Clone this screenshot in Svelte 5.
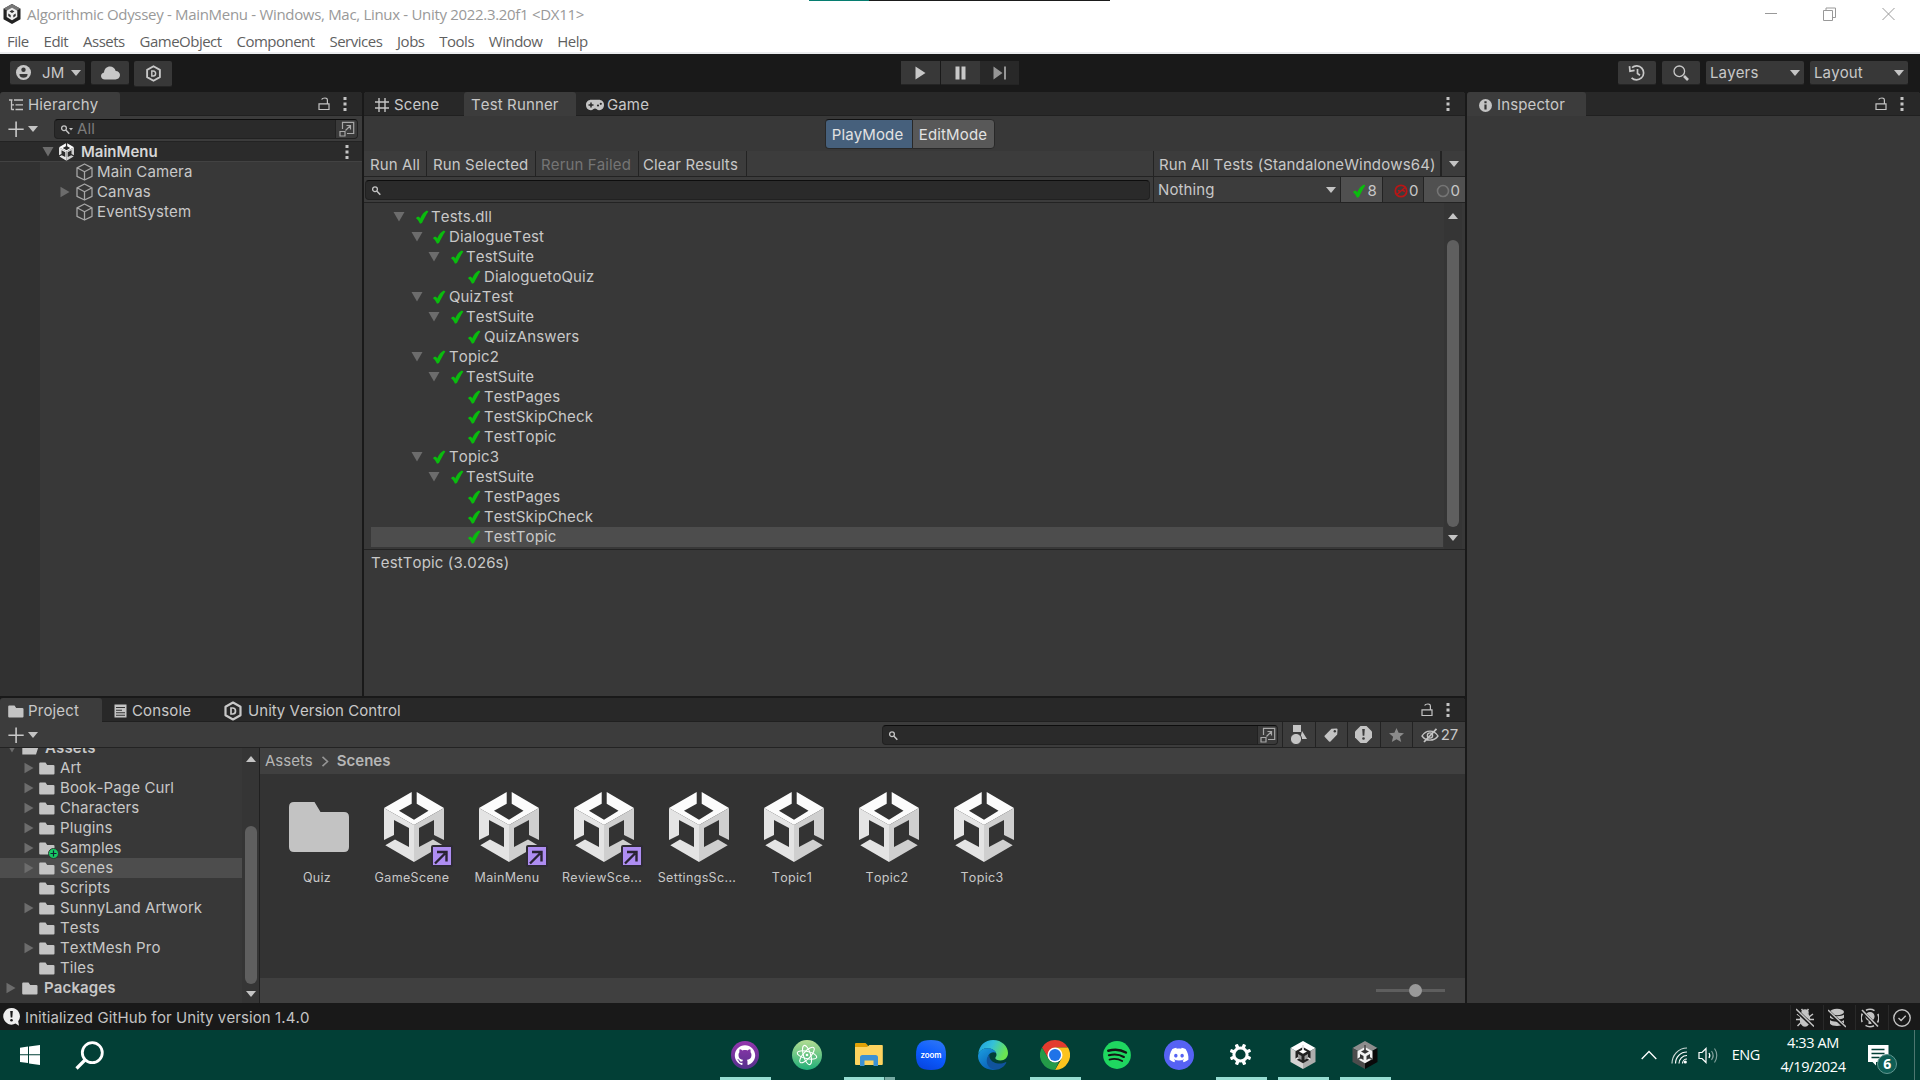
<script>
  const menus = ['File', 'Edit', 'Assets', 'GameObject', 'Component', 'Services', 'Jobs', 'Tools', 'Window', 'Help'];

  const tests = [
    { d: 0, n: 'Tests.dll', open: true },
    { d: 1, n: 'DialogueTest', open: true },
    { d: 2, n: 'TestSuite', open: true },
    { d: 3, n: 'DialoguetoQuiz' },
    { d: 1, n: 'QuizTest', open: true },
    { d: 2, n: 'TestSuite', open: true },
    { d: 3, n: 'QuizAnswers' },
    { d: 1, n: 'Topic2', open: true },
    { d: 2, n: 'TestSuite', open: true },
    { d: 3, n: 'TestPages' },
    { d: 3, n: 'TestSkipCheck' },
    { d: 3, n: 'TestTopic' },
    { d: 1, n: 'Topic3', open: true },
    { d: 2, n: 'TestSuite', open: true },
    { d: 3, n: 'TestPages' },
    { d: 3, n: 'TestSkipCheck' },
    { d: 3, n: 'TestTopic', selected: true }
  ];

  const folders = [
    { n: 'Art', arrow: true },
    { n: 'Book-Page Curl', arrow: true },
    { n: 'Characters', arrow: true },
    { n: 'Plugins', arrow: true },
    { n: 'Samples', arrow: true, added: true },
    { n: 'Scenes', arrow: true, selected: true },
    { n: 'Scripts' },
    { n: 'SunnyLand Artwork', arrow: true },
    { n: 'Tests' },
    { n: 'TextMesh Pro', arrow: true },
    { n: 'Tiles' }
  ];

  const assets = [
    { n: 'Quiz', folder: true },
    { n: 'GameScene', badge: true },
    { n: 'MainMenu', badge: true },
    { n: 'ReviewSce...', badge: true },
    { n: 'SettingsSc...' },
    { n: 'Topic1' },
    { n: 'Topic2' },
    { n: 'Topic3' }
  ];

  const apps = [
    { id: 'github', run: true },
    { id: 'atom' },
    { id: 'files', run: true, stacked: true },
    { id: 'zoom' },
    { id: 'edge' },
    { id: 'chrome', run: true },
    { id: 'spotify' },
    { id: 'discord' },
    { id: 'settings', run: true },
    { id: 'unityhub', run: true },
    { id: 'unity', run: true }
  ];
</script>

{#snippet down()}<svg class="tri" width="10" height="6" viewBox="0 0 10 6"><path d="M0 0h10L5 6z" fill="#c4c4c4" /></svg>{/snippet}
{#snippet foldOpen()}<svg width="12" height="10" viewBox="0 0 12 10"><path d="M.5 0h11L6 9.500z" fill="#6c6c6c" /></svg>{/snippet}
{#snippet foldClosed()}<svg width="10" height="12" viewBox="0 0 10 12"><path d="M.5 .8v10.400L9.500 6z" fill="#6c6c6c" /></svg>{/snippet}
{#snippet check()}<svg width="14" height="14" viewBox="0 0 14 14"><path d="M1 8.200C2 6.800 3.600 6.400 4.500 7.300l.7 1.200C6.600 5.200 8.600 2 11.800.5l1.600.9C10.800 5 9 9 7 12.900l-2 .8C3.800 11.300 2.700 9.600 1 8.200z" fill="#0abb0e" /></svg>{/snippet}
{#snippet kebab()}<svg width="4" height="14" viewBox="0 0 4 14"><path d="M.5 0h3v3h-3zM.5 5.500h3v3h-3zM.5 11h3v3h-3z" fill="#c4c4c4" /></svg>{/snippet}
{#snippet lock()}<svg width="12" height="14" viewBox="0 0 12 14" fill="none" stroke="#c4c4c4" stroke-width="1.200"><path d="M1 6.800h10v5.700H1zM9.400 6.500V3.200C9.400 1.600 8.500 1 7 1 5.500 1 4.200 1.300 3.600 2.600" /></svg>{/snippet}
{#snippet lens()}<svg width="11" height="11" viewBox="0 0 11 11" fill="none" stroke="#c4c4c4"><circle cx="4" cy="4.200" r="2.400" stroke-width="1.300" /><path d="M6 6.200l3.300 3.500" stroke-width="1.500" /></svg>{/snippet}
{#snippet expand()}<svg width="16" height="16" viewBox="0 0 16 16" fill="none" stroke="#a8a8a8" stroke-width="1.200"><path d="M3.500 8V1.300h11.200v11.200H8M1 10.500h5V15H1zM6.500 9.500l5-5M7.500 4.500h4v4" /></svg>{/snippet}
{#snippet plus()}<svg width="16" height="16" viewBox="0 0 16 16"><path d="M7.300 .5h1.600v7h6.800v1.600H8.900v6.900H7.300V9.100H.4V7.500h6.900z" fill="#c9c9c9" /></svg>{/snippet}
{#snippet cube()}<svg width="17" height="18" viewBox="0 0 17 18" fill="none" stroke="#a6a6a6" stroke-width="1.300" stroke-linejoin="round"><path d="M8.500 1L16 4.800v8.600L8.500 17 1 13.400V4.800zM1 4.800l7.500 4 7.500-4M8.500 8.800V17" /></svg>{/snippet}
{#snippet folder()}<svg width="16" height="13" viewBox="0 0 16 13"><path d="M.2 1.500Q.2.500 1.200.5h5.300L8.200 2.900h6Q15.500 2.900 15.500 4v7.600q0 1-1 1H1.200q-1 0-1-1z" fill="#c4c4c4" /></svg>{/snippet}
{#snippet dhex(s)}<svg width={s} height={s} viewBox="0 0 20 20" fill="none" stroke="#c8c8c8"><path d="M10 1.500l7.500 4.200v8.600L10 18.500l-7.500-4.200V5.700z" stroke-width="2.200" stroke-linejoin="round" /><path d="M8 7v6h1.700c1.800 0 2.800-1.200 2.800-3s-1-3-2.800-3z" stroke-width="1.700" /></svg>{/snippet}
{#snippet unityCube(w, h)}
  <svg width={w} height={h} viewBox="0 0 60 70">
    <path d="M27.700 0V11.700L15 18.700 30 27.700 44.500 18.700 32.700 11.700V0L60 16 30 33 0 16z" fill="#fcfcfc" />
    <path d="M0 16L30 33V70L1.300 53.300 11 47.500 25 55V36L10 28V43L0 48z" fill="#e4e4e4" />
    <path d="M60 16L30 33V70L58.700 53.300 49 47.500 35 55V36L50 28V43L60 48z" fill="#cfcfcf" />
  </svg>
{/snippet}
{#snippet appIcon(id)}
  <svg width="30" height="30" viewBox="0 0 30 30">
    {#if id === 'github'}
      <defs><linearGradient id="gh" x2="0" y2="1"><stop stop-color="#9437ae" /><stop offset="1" stop-color="#55308c" /></linearGradient></defs>
      <circle cx="15" cy="15" r="14" fill="url(#gh)" />
      <path transform="translate(4.800 4.900) scale(.85)" fill="#fff" d="M12 .297c-6.630 0-12 5.373-12 12 0 5.303 3.438 9.800 8.205 11.385.6.113.82-.258.82-.577 0-.285-.01-1.040-.015-2.040-3.338.724-4.042-1.610-4.042-1.610C4.422 18.070 3.633 17.700 3.633 17.700c-1.087-.744.084-.729.084-.729 1.205.084 1.838 1.236 1.838 1.236 1.070 1.835 2.809 1.305 3.495.998.108-.776.417-1.305.76-1.605-2.665-.3-5.466-1.332-5.466-5.930 0-1.310.465-2.380 1.235-3.220-.135-.303-.54-1.523.105-3.176 0 0 1.005-.322 3.300 1.230.96-.267 1.980-.399 3-.405 1.020.006 2.040.138 3 .405 2.280-1.552 3.285-1.230 3.285-1.230.645 1.653.24 2.873.12 3.176.765.840 1.230 1.910 1.230 3.220 0 4.610-2.805 5.625-5.475 5.920.42.360.81 1.096.81 2.220 0 1.606-.015 2.896-.015 3.286 0 .315.210.690.825.570C20.565 22.092 24 17.592 24 12.297c0-6.627-5.373-12-12-12" />
    {:else if id === 'atom'}
      <defs><linearGradient id="at" x2="0" y2="1"><stop stop-color="#b4dd92" /><stop offset="1" stop-color="#1fae78" /></linearGradient></defs>
      <circle cx="15" cy="15" r="15" fill="url(#at)" />
      <g fill="none" stroke="#fff" stroke-width="1.100"><ellipse cx="15" cy="15" rx="10" ry="3.600" transform="rotate(13 15 15)" /><ellipse cx="15" cy="15" rx="10" ry="3.600" transform="rotate(73 15 15)" /><ellipse cx="15" cy="15" rx="10" ry="3.600" transform="rotate(133 15 15)" /></g>
      <circle cx="15" cy="15" r="1.300" fill="#fff" />
    {:else if id === 'files'}
      <path d="M1 4q0-1 1-1h9.500l2.500 2.500V9H1z" fill="#e0a106" />
      <path d="M1 7h12l2.500-2H28q.8 0 .8.800V24q0 1-1 1H2q-1 0-1-1z" fill="#fdd35f" />
      <path d="M6 26V17.500q0-2.500 2.500-2.500h13q2.500 0 2.500 2.500V26h-4.500v-5.500h-9V26z" fill="#3c91d4" />
    {:else if id === 'zoom'}
      <defs><linearGradient id="zm" x1=".7" x2=".3" y2="1"><stop stop-color="#2c74f5" /><stop offset=".5" stop-color="#0b5cff" /><stop offset="1" stop-color="#0845e0" /></linearGradient></defs>
      <path d="M15 0C26 0 30 4 30 15S26 30 15 30 0 26 0 15 4 0 15 0z" fill="url(#zm)" />
      <text x="15" y="17.600" text-anchor="middle" font-family="Inter, sans-serif" font-size="8" font-weight="600" fill="#fff" textLength="21">zoom</text>
    {:else if id === 'edge'}
      <defs>
        <linearGradient id="ed1" x2="1" y2=".35"><stop stop-color="#1b9ee0" /><stop offset=".5" stop-color="#35c1d8" /><stop offset="1" stop-color="#6ae551" /></linearGradient>
        <linearGradient id="ed2" x2=".6" y2="1"><stop stop-color="#1b9fe0" /><stop offset="1" stop-color="#0a60b8" /></linearGradient>
      </defs>
      <path d="M.3 14C1 5.500 7 0 15 0c9 0 15 6.500 15 13 0 4.500-3.300 7.500-7.500 7.500-3 0-5.200-1-5.200-2.500 0-1 1.200-1.400 1.200-3.300 0-3.200-4-6.400-9-6.400C5.500 8.300 2 10.300.3 14z" fill="url(#ed1)" />
      <path d="M.2 14.500C2 10 5.500 8.300 9.500 8.300c4 0 7.400 2 8.600 4.700-2.400-1.600-6.600-.6-7.900 3-1.700 5 2.300 13 8 13.600C8 31.500 0 24 0 16z" fill="url(#ed2)" />
      <path d="M12 13.800c-3.700 2.900-4.600 9-1 13 2.800 3 6.700 3.500 10 2.500 3.300-1.400 5.700-3.500 7.200-6.300.4-.8-.2-1.200-.8-.8-4.800 2.700-12.700 1.600-15.400-3.700-.8-1.500-.9-3.200 0-4.700z" fill="#10539c" />
    {:else if id === 'chrome'}
      <path d="M15 0a15 15 0 0 1 13 7.500H15L8.500 18.700 2 7.500A15 15 0 0 1 15 0z" fill="#e33b2e" />
      <path d="M15 7.500h13A15 15 0 0 1 15 30l6.500-11.300z" fill="#fcc31e" />
      <path d="M2 7.500l6.500 11.200C10 21.500 12.500 22.500 15 22.500c1.500 0 3-.4 4-1L15 30A15 15 0 0 1 2 7.500z" fill="#249a48" />
      <circle cx="15" cy="15" r="7.500" fill="#fff" /><circle cx="15" cy="15" r="6" fill="#1f73e8" />
    {:else if id === 'spotify'}
      <circle cx="15" cy="15" r="13.900" fill="#1fd760" />
      <g fill="none" stroke="#141414" stroke-linecap="round"><path d="M6.300 10.700c6-1.700 12.600-1.200 17.600 1.800" stroke-width="2.500" /><path d="M6.900 15.300c5.200-1.500 10.600-.9 15 1.700" stroke-width="2.100" /><path d="M7.500 19.600c4.500-1.200 9-.7 12.700 1.500" stroke-width="1.800" /></g>
    {:else if id === 'discord'}
      <circle cx="15" cy="15" r="15" fill="#5662f4" />
      <path transform="translate(5.500 5.500) scale(.79)" fill="#fff" d="M20.317 4.370a19.800 19.800 0 0 0-4.885-1.515c-.29.410-.520.900-.690 1.290-1.840-.280-3.680-.280-5.490 0-.160-.390-.400-.880-.690-1.290a19.700 19.700 0 0 0-4.890 1.515C.530 9.050-.319 13.580.099 18.058c2.050 1.510 4.040 2.420 6.020 3.090.500-.690.920-1.350 1.270-2.100-.690-.250-1.310-.550-1.920-1.020l.460-.380c3.930 1.790 8.180 1.790 12.140 0l.450.380c-.600.420-1.220.740-1.920 1.020.360.700.770 1.410 1.270 2.100 1.960-.61 3.950-1.520 6.030-3.090.5-5.177-.838-9.674-3.583-13.688zM8.020 15.331c-1.183 0-2.157-1.086-2.157-2.419 0-1.333.956-2.419 2.157-2.419 1.211 0 2.176 1.095 2.157 2.419 0 1.333-.956 2.419-2.157 2.419zm7.975 0c-1.183 0-2.157-1.086-2.157-2.419 0-1.333.955-2.419 2.157-2.419 1.210 0 2.176 1.095 2.157 2.419 0 1.333-.946 2.419-2.157 2.419z" />
    {:else if id === 'settings'}
      <circle cx="14.500" cy="14.500" r="6.600" fill="none" stroke="#fff" stroke-width="3" />
      <g fill="#fff">
        {#each [22, 67, 112, 157, 202, 247, 292, 337] as a}
          <rect x="12.800" y="3.600" width="3.400" height="4.600" rx=".8" transform="rotate({a} 14.500 14.500)" />
        {/each}
      </g>
    {:else}
      {@const dark = id === 'unity'}
      <path d="M15 1l12.500 7L15 15 2.500 8z" fill={dark ? '#8d8d8d' : '#fff'} />
      <path d="M2.500 8L15 15v14L2.500 22z" fill={dark ? '#4c4c4c' : '#d4d4d4'} />
      <path d="M27.500 8L15 15v14l12.500-7z" fill={dark ? '#0a0a0a' : '#adadad'} />
      <path d="M15 7l7.500 4.200v7.800L15 23.200l-7.500-4.200v-7.800z" fill={dark ? '#f2f2f2' : '#222'} />
      <path d="M15 5v5M7.500 19.500l3.500-2M22.500 19.500l-3.500-2" stroke={dark ? '#555' : '#e4e4e4'} stroke-width="1.800" />
      <path d="M11 11.500l4-2 4 2-4 2.200z" fill={dark ? '#333' : '#fff'} />
      <path d="M10 14l3.500 2v4L10 18zM20 14l-3.500 2v4l3.500-2z" fill={dark ? '#333' : '#999'} />
    {/if}
  </svg>
{/snippet}

<div class="screen">
  <header class="titlebar">
    <div class="title">
      <svg width="18" height="20" viewBox="0 0 18 20"><path d="M9 0l8.500 4.800v10.400L9 20 .5 15.200V4.800z" fill="#222" /><path d="M9 0l8.500 4.800L9 9 .5 4.800z" fill="#777" /><path d="M9 3.800l5.300 3v6.300L9 16.200l-5.300-3.100V6.800z" fill="#eee" /><path d="M6.500 7.500L9 6l2.500 1.500L9 9zM5.300 9.600l2.400 1.400v2.400l-2.400-1.300zM12.700 9.600L10.300 11v2.400l2.400-1.300z" fill="#333" /></svg>
      <span>Algorithmic Odyssey - MainMenu - Windows, Mac, Linux - Unity 2022.3.20f1 &lt;DX11&gt;</span>
    </div>
    <div class="topstrip"></div>
    <div class="winbtns">
      <svg width="12" height="14" viewBox="0 0 12 14"><path d="M0 6.500h12" stroke="#999" /></svg>
      <svg width="13" height="14" viewBox="0 0 13 14" fill="none" stroke="#999"><path d="M.5 3.500h9v10h-9zM3 3V1h9.500v9.500H10" /></svg>
      <svg width="13" height="14" viewBox="0 0 13 14"><path d="M.5 1l12 12M12.500 1l-12 12" stroke="#999" fill="none" /></svg>
    </div>
  </header>
  <nav class="menubar">
    {#each menus as m}<span>{m}</span>{/each}
  </nav>

  <div class="toolbar">
    <div class="group left">
      <div class="btn account">
        <svg width="15" height="15" viewBox="0 0 15 15"><circle cx="7.500" cy="7.500" r="7.500" fill="#c8c8c8" /><circle cx="7.500" cy="4.800" r="2.200" fill="#383838" /><path d="M3.500 9h8v.8c0 1.900-1.800 2.900-4 2.900s-4-1-4-2.900z" fill="#383838" /></svg>
        <span>JM</span>
        {@render down()}
      </div>
      <div class="btn cloud"><svg width="19" height="14" viewBox="0 0 19 14"><path d="M4 13.500C1.500 13.500 0 11.800 0 9.900 0 8.200 1.300 6.800 3 6.500 3.300 2.800 5.800.5 9 .5c2.700 0 4.900 1.600 5.700 4.400 2.500.1 4.300 1.800 4.300 4.200 0 2.600-1.900 4.400-4.600 4.400z" fill="#c8c8c8" /></svg></div>
      <div class="btn vcs">{@render dhex(17)}</div>
    </div>
    <div class="group play">
      <div class="btn"><svg width="11" height="14" viewBox="0 0 11 14"><path d="M.5 .5v13L10.500 7z" fill="#c8c8c8" /></svg></div>
      <div class="btn"><svg width="11" height="14" viewBox="0 0 11 14"><path d="M.5 .5h4v13h-4zM6.500 .5h4v13h-4z" fill="#c8c8c8" /></svg></div>
      <div class="btn dim"><svg width="14" height="14" viewBox="0 0 14 14"><path d="M.5 .5v13L9.500 7zM11 .5h2v13h-2z" fill="#959595" /></svg></div>
    </div>
    <div class="group right">
      <div class="btn sq"><svg width="18" height="16" viewBox="0 0 18 16" fill="none" stroke="#c8c8c8" stroke-width="1.700"><path d="M4 2.600A7 7 0 1 1 3.600 12.800M9.500 4v4.500l2.500 1.700" /><path d="M1.500 1.200L2 6.200l4.600-.8" /></svg></div>
      <div class="btn sq"><svg width="16" height="16" viewBox="0 0 16 16" fill="none" stroke="#c8c8c8"><circle cx="6.300" cy="6.300" r="5.300" stroke-width="1.300" /><path d="M11 11l4 4" stroke-width="2.600" /></svg></div>
      <div class="btn drop layers"><span>Layers</span>{@render down()}</div>
      <div class="btn drop"><span>Layout</span>{@render down()}</div>
    </div>
  </div>

  <div class="workspace">
    <div class="main">
      <div class="upper">
        <section class="hierarchy">
          <div class="tabs">
            <div class="tab active htab">
              <svg width="14" height="12" viewBox="0 0 14 12" fill="none" stroke="#c4c4c4" stroke-width="1.300"><path d="M0 1h3.500M5 1h9M2.500 1.500v9.200M2.500 5.800H5M6.500 5.800H14M2.500 10.500H5M6.500 10.500H14" /></svg>
              <span>Hierarchy</span>
            </div>
            <div class="tabtools">{@render lock()}{@render kebab()}</div>
          </div>
          <div class="htools">
            <div class="add">{@render plus()}{@render down()}</div>
            <div class="field hsearch">{@render lens()}<svg class="caret" width="4" height="3" viewBox="0 0 4 3"><path d="M0 0h4L2 2.500z" fill="#c4c4c4" /></svg><span class="ph">All</span><div class="pick">{@render expand()}</div></div>
          </div>
          <div class="scene">
            <i class="fold">{@render foldOpen()}</i>
            <i class="sic">{@render unityCube(15, 18)}</i>
            <b>MainMenu</b>
            <i class="sk">{@render kebab()}</i>
          </div>
          <div class="objects">
            <div class="gutter"></div>
            <div class="objlist">
              {#each ['Main Camera', 'Canvas', 'EventSystem'] as o}
                <div class="obj"><i>{#if o === 'Canvas'}{@render foldClosed()}{/if}</i>{@render cube()}<span>{o}</span></div>
              {/each}
            </div>
          </div>
        </section>

        <section class="runner">
          <div class="tabs">
            <div class="tab scenetab"><svg width="14" height="14" viewBox="0 0 14 14"><path d="M4 0v14M10 0v14M0 4h14M0 10h14" stroke="#c4c4c4" stroke-width="1.400" /></svg><span>Scene</span></div>
            <div class="tab active rtab"><span>Test Runner</span></div>
            <div class="tab gametab">
              <svg width="18" height="12" viewBox="0 0 18 12"><path d="M5.500 .8C2 .8 0 3 0 6s2 5.200 4.800 5.200C7 11.200 7.500 9.500 9 9.500s2 1.700 4.200 1.700C16 11.200 18 9 18 6S16 .8 12.500 .8z" fill="#c4c4c4" /><path d="M5 3.500v5M2.500 6h5" stroke="#282828" stroke-width="1.500" /><circle cx="12" cy="6.500" r="1.100" fill="#282828" /><circle cx="14.800" cy="4.800" r="1.100" fill="#282828" /></svg>
              <span>Game</span>
            </div>
            <div class="tabtools">{@render kebab()}</div>
          </div>
          <div class="modes"><span class="mode on">PlayMode</span><span class="mode">EditMode</span></div>
          <div class="actions">
            <span class="act a1">Run All</span>
            <span class="act a2">Run Selected</span>
            <span class="act a3 off">Rerun Failed</span>
            <span class="act a4">Clear Results</span>
            <span class="act a5">Run All Tests (StandaloneWindows64)</span>
            <span class="act a6">{@render down()}</span>
          </div>
          <div class="filter">
            <div class="field tsearch">{@render lens()}</div>
            <div class="nothing"><span>Nothing</span>{@render down()}</div>
            <div class="cnt on">{@render check()}<span>8</span></div>
            <div class="cnt"><svg width="14" height="14" viewBox="0 0 14 14"><circle cx="7" cy="7" r="5.700" fill="none" stroke="#b91616" stroke-width="1.800" /><path d="M3 10.500L11 3.500M4 6.500l2.500 1M8 6l3 1.500" stroke="#b91616" stroke-width="1.500" /></svg><span>0</span></div>
            <div class="cnt on"><svg width="14" height="14" viewBox="0 0 14 14"><circle cx="7" cy="7" r="5.500" fill="none" stroke="#747474" stroke-width="1.600" /></svg><span>0</span></div>
          </div>
          <div class="treewrap">
            <div class="tree">
              {#each tests as t}
                <div class="trow d{t.d}" class:selected={t.selected}>
                  <i>{#if t.open}{@render foldOpen()}{/if}</i>{@render check()}<span>{t.n}</span>
                </div>
              {/each}
            </div>
            <div class="vscroll">
              <svg width="10" height="6" viewBox="0 0 10 6"><path d="M0 6h10L5 0z" fill="#c4c4c4" /></svg>
              <div class="thumb"></div>
              {@render down()}
            </div>
          </div>
          <div class="detail">TestTopic (3.026s)</div>
        </section>
      </div>

      <section class="project">
        <div class="tabs">
          <div class="tab active ptab">{@render folder()}<span>Project</span></div>
          <div class="tab ctab"><svg width="13" height="14" viewBox="0 0 13 14"><path d="M.5 .5h12v13H.5z" fill="#c4c4c4" /><path d="M2 3.500h9M2 6.200h6M2 8.800h9M2 11.300h9" stroke="#333" stroke-width="1.100" /></svg><span>Console</span></div>
          <div class="tab vtab">{@render dhex(20)}<span>Unity Version Control</span></div>
          <div class="tabtools">{@render lock()}{@render kebab()}</div>
        </div>
        <div class="ptools">
          <div class="add">{@render plus()}{@render down()}</div>
          <div class="field psearch">{@render lens()}<div class="pick">{@render expand()}</div></div>
          <div class="pb"><svg width="17" height="20" viewBox="0 0 17 20"><path d="M3 0h8v7H3zM12 6l5 8h-7z" fill="#c4c4c4" /><circle cx="6" cy="14" r="5.600" fill="#c4c4c4" stroke="#3c3c3c" /></svg></div>
          <div class="pb"><svg width="14" height="14" viewBox="0 0 14 14"><path d="M.8 7.500L7.500.8l5-.3q1 0 1 1l-.3 5L6.500 13.500q-.8.600-1.500 0L.8 9q-.6-.8 0-1.500z" fill="#c4c4c4" /><circle cx="10.800" cy="3.200" r="1.200" fill="#3c3c3c" /></svg></div>
          <div class="pb"><svg width="17" height="17" viewBox="0 0 17 17"><path d="M5.500 0h6L17 5.500v6L11.500 17h-6L0 11.500v-6z" fill="#c4c4c4" /><path d="M7.200 3h2.600l-.5 6.800H7.700z" fill="#3c3c3c" /><circle cx="8.500" cy="12.500" r="1.300" fill="#3c3c3c" /></svg></div>
          <div class="pb"><svg width="15" height="14" viewBox="0 0 15 14"><path d="M7.500 0l2.100 4.800 5.400.5-4.100 3.500 1.300 5.200-4.700-2.800L2.800 14l1.300-5.200L0 5.300l5.400-.5z" fill="#8a8a8a" /></svg></div>
          <div class="pb hid"><svg width="18" height="15" viewBox="0 0 18 15" fill="none" stroke="#c4c4c4" stroke-width="1.400"><path d="M1 8c4-6.500 12-6.500 16 0-4 5.500-12 5.500-16 0z" /><circle cx="9" cy="7.500" r="2.600" /><path d="M3 14L15.500.8" stroke-width="1.800" /></svg><span>27</span></div>
        </div>
        <div class="pbody">
          <div class="ptreewrap">
            <div class="ptree">
              <div class="prow root"><i>{@render foldOpen()}</i><svg width="17" height="13" viewBox="0 0 17 13"><path d="M.3 12.500V1.500Q.3.500 1.300.5h4.500L7.500 2.300h6v1.500h3.300L14 12.500z" fill="#c4c4c4" /></svg><b>Assets</b></div>
              {#each folders as f}
                <div class="prow" class:selected={f.selected}>
                  <i>{#if f.arrow}{@render foldClosed()}{/if}</i>
                  <div class="fico">{@render folder()}{#if f.added}<svg class="added" width="11" height="11" viewBox="0 0 11 11"><circle cx="5.500" cy="5.500" r="5" fill="#18c964" stroke="#2b3b30" /><path d="M5.500 2.500v6M2.500 5.500h6" stroke="#123" stroke-width="1.200" /></svg>{/if}</div>
                  <span>{f.n}</span>
                </div>
              {/each}
              <div class="prow root"><i>{@render foldClosed()}</i>{@render folder()}<b>Packages</b></div>
            </div>
            <div class="vscroll pscroll">
              <svg width="10" height="6" viewBox="0 0 10 6"><path d="M0 6h10L5 0z" fill="#c4c4c4" /></svg>
              <div class="thumb"></div>
              {@render down()}
            </div>
          </div>
          <div class="browser">
            <div class="crumbs"><span>Assets</span><svg width="8" height="11" viewBox="0 0 8 11"><path d="M1.500 .8l5 4.700-5 4.700" stroke="#959595" stroke-width="1.600" fill="none" /></svg><b>Scenes</b></div>
            <div class="grid">
              {#each assets as a}
                <div class="asset">
                  <div class="pic">
                    {#if a.folder}
                      <svg width="60" height="50" viewBox="0 0 60 50"><path d="M0 5q0-5 5-5h20.500l6 10H55q5 0 5 5v30q0 5-5 5H5q-5 0-5-5z" fill="#c3c3c3" /></svg>
                    {:else}
                      {@render unityCube(60, 70)}
                    {/if}
                    {#if a.badge}<svg class="badge" width="22" height="22" viewBox="0 0 22 22"><rect width="22" height="22" rx="2" fill="#2e2b35" /><path d="M2 2h18v18H2z" fill="#ae8df2" /><path d="M4 18.500L14 8.500M6 7h9.500v9.500" stroke="#282333" stroke-width="2.400" fill="none" /></svg>{/if}
                  </div>
                  <span>{a.n}</span>
                </div>
              {/each}
            </div>
            <div class="zoombar"><div class="slider"><div class="knob"></div></div></div>
          </div>
        </div>
      </section>
    </div>

    <aside class="inspector">
      <div class="tabs">
        <div class="tab active itab"><svg width="13" height="13" viewBox="0 0 13 13"><circle cx="6.500" cy="6.500" r="6.500" fill="#c4c4c4" /><path d="M5.400 5.400h2.200v5.200H5.400zM5.400 2.200h2.200v2H5.400z" fill="#333" /></svg><span>Inspector</span></div>
        <div class="tabtools">{@render lock()}{@render kebab()}</div>
      </div>
    </aside>
  </div>

  <footer class="status">
    <svg width="17" height="18" viewBox="0 0 17 18"><path d="M8.500 0a8.300 8.300 0 1 0 4 15.600l3.500 2.200-.8-4.500A8.300 8.300 0 0 0 8.500 0z" fill="#eee" /><path d="M7.200 3h2.600l-.5 6.500H7.700z" fill="#191919" /><circle cx="8.500" cy="12.200" r="1.300" fill="#191919" /></svg>
    <span>Initialized GitHub for Unity version 1.4.0</span>
    <div class="sticons">
      <div><svg width="18" height="20" viewBox="0 0 18 20" fill="none" stroke="#c4c4c4" stroke-width="1.500"><ellipse cx="9" cy="11.500" rx="4.500" ry="6.500" fill="#c4c4c4" /><path d="M6 5a3 3 0 0 1 6 0zM5.500 1l1.500 2M12.500 1L11 3M1 6l4 3M17 6l-4 3M0 11.500h18M1.500 18L5 14.500M16.500 18L13 14.500" fill="#c4c4c4" /><path d="M0 2l18 17" stroke="#191919" stroke-width="3.500" /><path d="M0 1l18 17.500" /></svg></div>
      <div><svg width="18" height="20" viewBox="0 0 18 20" fill="#c4c4c4"><ellipse cx="9" cy="4" rx="7" ry="3.200" /><path d="M2 6.500c2 2.300 12 2.300 14 0v3.300c-2 2.300-12 2.300-14 0zM2 12c2 2.300 12 2.300 14 0v3.700c-2 3-12 3-14 0z" /><path d="M0 3l18 17" stroke="#191919" stroke-width="3.500" /><path d="M0 2l18 17" stroke="#c4c4c4" stroke-width="1.500" /></svg></div>
      <div><svg width="18" height="20" viewBox="0 0 18 20" fill="none" stroke="#c4c4c4" stroke-width="1.600"><path d="M5 2.300a8.600 8.600 0 0 1 8.500.3M16.800 6a8.500 8.500 0 0 1-.3 8.500M13 17.700a8.600 8.600 0 0 1-8.500-.3M1.200 14a8.500 8.500 0 0 1 .3-8.500" /><circle cx="9" cy="8.500" r="3.800" fill="#c4c4c4" /><path d="M7.500 14.500h3" stroke-width="3" /><path d="M1 3l16 16" stroke="#191919" stroke-width="3" /><path d="M1 2l16 16.500" /></svg></div>
      <div><svg width="18" height="18" viewBox="0 0 18 18" fill="none" stroke="#c4c4c4" stroke-width="1.400"><circle cx="9" cy="9" r="8.200" /><path d="M5.500 9l2.600 2.600 4.600-4.800" /></svg></div>
    </div>
  </footer>

  <div class="taskbar">
    <svg class="win" width="20" height="20" viewBox="0 0 20 20"><path d="M0 2.800L8 1.600v7.700H0zM9 1.500L20 0v9.300H9zM0 10.300h8V18l-8-1.100zM9 10.300h11V20L9 18.400z" fill="#fff" /></svg>
    <svg class="find" width="29" height="29" viewBox="0 0 29 29" fill="none" stroke="#fff"><circle cx="17.300" cy="11.700" r="10" stroke-width="2.800" /><path d="M10 19L1.500 27.500" stroke-width="3.200" /></svg>
    <div class="apps">
      {#each apps as a}
        <div class="app" class:run={a.run} class:stacked={a.stacked}>{@render appIcon(a.id)}</div>
      {/each}
    </div>
    <div class="tray">
      <svg width="16" height="10" viewBox="0 0 16 10"><path d="M.7 9L8 1.500 15.300 9" stroke="#fff" stroke-width="1.300" fill="none" /></svg>
      <svg class="wifi" width="17" height="17" viewBox="0 0 17 17" fill="none" stroke="#fff" stroke-width="1.200"><path d="M1 16.500C1 8 7.500 1 16 1" opacity=".8" /><path d="M4.500 16.500c0-6.500 5-11.500 11.500-11.500M8 16.500c0-4.500 3.500-8 8-8M11.500 16.500c0-2.500 2-4.500 4.500-4.500" /><circle cx="14.300" cy="15" r="1.600" fill="#fff" stroke="none" /></svg>
      <svg class="vol" width="21" height="19" viewBox="0 0 21 19" fill="none" stroke="#fff" stroke-width="1.200"><path d="M1 6.500h3L8 2.500v14l-4-4H1z" /><path d="M11 7c1 1.500 1 3.500 0 5" /><path d="M13.500 5c2 2.700 2 6.300 0 9M16.500 2.500c3 4 3 10 0 14" opacity=".5" /></svg>
      <span class="lang">ENG</span>
      <div class="clock"><span>4:33 AM</span><span>4/19/2024</span></div>
      <div class="notes">
        <svg width="21" height="21" viewBox="0 0 21 21"><path d="M0 0h20.500v17H8v3.500L4.500 17H0z" fill="#fff" /><path d="M3.500 4.500h13M3.500 8.500h13M3.500 12.500h8" stroke="#023f36" stroke-width="1.300" /></svg>
        <b>6</b>
      </div>
    </div>
  </div>
</div>

<style>
  :global(body) { margin: 0; background: #191919; }
  .screen { width: 1920px; height: 1080px; display: flex; flex-direction: column; overflow: hidden; font: 15px/20px Inter, sans-serif; font-kerning: none; letter-spacing: .13px; color: #c8c8c8; white-space: nowrap; }
  .screen * { box-sizing: border-box; }
  svg { display: block; flex: none; }
  i { display: block; font-style: normal; }
  b { font-weight: 600; }

  .titlebar { height: 28px; background: #fff; display: flex; justify-content: space-between; flex: none; }
  .title { display: flex; align-items: center; gap: 6px; width: 809px; padding-left: 3px; font: 15px/28px "Open Sans", sans-serif; letter-spacing: -.31px; color: #999; }
  .topstrip { width: 301px; height: 1px; background: linear-gradient(90deg, #067d70 60px, #1b1b1b 60px); margin-right: auto; }
  .winbtns { display: flex; align-items: center; gap: 46px; padding-right: 25px; }
  .menubar { height: 26px; background: #fff; border-bottom: 2px solid #ebecef; display: flex; padding-left: 7px; gap: 14.800px; font: 15px/27px "Open Sans", sans-serif; letter-spacing: -.5px; color: #5f5f5f; flex: none; }

  .toolbar { height: 38px; background: #191919; display: grid; grid-template-columns: 901px 1fr auto; padding: 7px 12px 0 0; flex: none; }
  .group { display: flex; align-items: flex-start; }
  .left { padding-left: 10px; gap: 6px; }
  .play { gap: 1px; }
  .right { gap: 6px; }
  .btn { height: 24px; width: 38px; background: #383838; display: flex; align-items: center; justify-content: center; border-radius: 2px; border-bottom: 1px solid #242424; }
  .btn.account { width: 75px; justify-content: flex-start; padding-left: 6px; }
  .account span { margin-left: 11px; width: 29px; }
  .btn.vcs { height: 26px; margin-left: -1px; }
  .play .btn { width: 39px; border-radius: 0; }
  .play .btn.dim { background: #282828; margin-left: -1px; }
  .btn.drop { width: 98px; justify-content: space-between; padding: 0 4px; }

  .workspace { flex: 1; display: grid; grid-template-columns: 1465px 1fr; column-gap: 2px; min-height: 0; }
  .main { display: flex; flex-direction: column; gap: 2px; min-height: 0; }
  .upper { height: 604px; display: grid; grid-template-columns: 362px 1fr; column-gap: 2px; flex: none; }
  section, .inspector { background: #383838; display: flex; flex-direction: column; min-height: 0; min-width: 0; border-radius: 3px 3px 0 0; overflow: hidden; }

  .tabs { height: 24px; background: #282828; border-bottom: 1px solid #202020; display: flex; flex: none; }
  .tab { height: 24px; display: flex; align-items: center; gap: 6px; padding: 2px 0 0; flex: none; }
  .tab.active { background: #3c3c3c; border-radius: 3px 3px 0 0; }
  .tabtools { margin-left: auto; display: flex; align-items: center; gap: 13px; padding-right: 15px; }
  .htab { width: 120px; padding-left: 9px; gap: 5px; }
  .scenetab { width: 100px; padding-left: 11px; gap: 5px; }
  .rtab { width: 112px; padding-left: 7px; }
  .gametab { padding-left: 10px; gap: 3px; }
  .itab { width: 119px; padding-left: 12px; gap: 5px; }
  .inspector .tabtools { padding-right: 16px; }

  .field { background: #2a2a2a; border: 1px solid #212121; border-top-color: #0d0d0d; border-radius: 4px; height: 20px; display: flex; align-items: center; padding-left: 5px; }
  .ph { color: #7c7c7c; margin-left: 4px; line-height: 18px; }
  .caret { margin-left: -2px; }
  .pick { margin-left: auto; width: 22px; height: 18px; background: #3a3a3a; border-left: 1px solid #212121; display: flex; align-items: center; justify-content: center; border-radius: 0 3px 3px 0; }
  .add { display: flex; align-items: center; gap: 4px; padding-left: 8px; height: 25px; }
  .htools { height: 26px; background: #3c3c3c; border-bottom: 1px solid #232323; display: flex; align-items: center; flex: none; }
  .hsearch { width: 304px; margin: 1px 4px 0 auto; }

  .scene { height: 20px; background: #2b2b2b; border-bottom: 1px solid #424242; display: flex; align-items: center; padding: 0 13px 0 42px; flex: none; }
  .sic { margin: 0 7px 0 5px; }
  .scene b { color: #d6d6d6; letter-spacing: 0; }
  .sk { margin-left: auto; }
  .objects { flex: 1; display: grid; grid-template-columns: 40px 1fr; }
  .gutter { background: #313131; }
  .obj { height: 20px; display: flex; align-items: center; padding-left: 20px; gap: 4px; }
  .obj i { width: 12px; }

  .modes { height: 35px; padding: 3px 11px 0 0; display: flex; justify-content: center; flex: none; }
  .mode { height: 30px; background: #585858; border: 1px solid #282828; border-radius: 0 4px 4px 0; line-height: 30px; width: 83px; text-align: center; color: #e2e2e2; margin-right: -1px; }
  .mode.on { background: #46607c; border-top-color: #111; border-radius: 4px 0 0 4px; width: 88px; padding-right: 2px; }
  .actions { height: 26px; background: #3c3c3c; border-bottom: 1px solid #232323; display: flex; line-height: 27px; flex: none; }
  .act { border-right: 1px solid #232323; padding-left: 6px; }
  .act.off { color: #757575; }
  .a1 { width: 63px; } .a2 { width: 109px; } .a3 { width: 103px; padding-left: 5px; } .a4 { width: 108px; padding-left: 4px; }
  .a5 { margin-left: auto; width: 289px; border-left: 1px solid #232323; padding-left: 5px; border-right-width: 2px; }
  .a6 { width: 23px; padding-left: 7px; display: flex; align-items: center; border: 0; }
  .filter { height: 26px; background: #3c3c3c; border-bottom: 1px solid #232323; display: flex; flex: none; }
  .tsearch { width: 785px; margin: 3px 0 0 1px; }
  .nothing { width: 187px; margin-left: 3px; border-left: 1px solid #232323; padding: 1px 4px 0 4px; display: flex; align-items: center; justify-content: space-between; }
  .cnt { flex: 1; border-left: 1px solid #232323; display: flex; align-items: center; justify-content: flex-end; padding: 2px 5px 0 0; gap: 1px; letter-spacing: 0; }
  .cnt.on { background: #505050; }

  .treewrap { height: 347px; border-bottom: 1px solid #232323; display: flex; flex: none; }
  .tree { flex: 1; padding: 4px 1px 0 7px; }
  .trow { height: 20px; display: flex; align-items: center; line-height: 20px; }
  .trow i { width: 12px; margin-right: 10px; }
  .trow span { margin-left: 2px; }
  .trow.selected { background: #4d4d4d; }
  .d0 { padding-left: 22px; } .d1 { padding-left: 40px; } .d2 { padding-left: 57px; } .d3 { padding-left: 74px; }
  .d1 i { margin-right: 9px; }
  .d1 span, .d3 span { margin-left: 3px; }
  .vscroll { width: 18px; background: #353535; display: flex; flex-direction: column; align-items: center; padding: 10px 0 8px; margin-right: 3px; }
  .thumb { width: 12px; border-radius: 6px; background: #5f5f5f; margin: 21px 0 8px; flex: 1; }
  .detail { padding: 3px 0 0 7px; }

  .project { flex: 1; }
  .ptab { width: 102px; padding-left: 8px; gap: 4px; }
  .ctab { padding-left: 12px; gap: 5px; }
  .vtab { margin-left: 32px; gap: 5px; letter-spacing: .05px; }
  .ptools { height: 26px; background: #3c3c3c; border-bottom: 1px solid #232323; display: flex; flex: none; }
  .psearch { width: 396px; margin: 3px 4px 0 auto; }
  .psearch .pick { width: 20px; }
  .pb { width: 32.500px; border-left: 1px solid #232323; display: flex; align-items: center; justify-content: center; }
  .pb.hid { width: 53px; gap: 2px; letter-spacing: 0; padding: 1px 0 0 1px; }
  .pbody { flex: 1; display: grid; grid-template-columns: 259px 1fr; column-gap: 1px; background: #202020; min-height: 0; }
  .ptreewrap { display: flex; background: #383838; min-height: 0; overflow: hidden; }
  .ptree { width: 242px; margin-top: -10px; }
  .prow { height: 20px; display: flex; align-items: center; padding-left: 24px; }
  .prow i { width: 15px; }
  .prow span { margin-left: 5px; }
  .prow b { margin-left: 6px; }
  .prow.root { padding-left: 6px; }
  .prow.root i { width: 16px; }
  .prow.selected { background: #4d4d4d; }
  .fico { position: relative; }
  .added { position: absolute; left: 9px; top: 6px; }
  .pscroll { width: 17px; margin: 0; padding: 8px 0 6px; }
  .pscroll .thumb { margin: 64px 0 7px; }
  .browser { background: #333; display: flex; flex-direction: column; }
  .crumbs { height: 26px; background: #404040; display: flex; align-items: center; padding-left: 5px; gap: 8px; color: #b6b6b6; letter-spacing: 0; }
  .grid { flex: 1; display: flex; padding: 18px 0 0 11.500px; }
  .asset { width: 95px; display: flex; flex-direction: column; align-items: center; font-size: 12.500px; letter-spacing: .34px; }
  .asset span { margin: 6px 4px 0 0; }
  .pic { position: relative; width: 60px; height: 70px; display: flex; align-items: center; }
  .badge { position: absolute; left: 47px; top: 53px; }
  .zoombar { height: 25px; background: #404040; display: flex; align-items: center; justify-content: flex-end; padding-right: 20px; }
  .slider { width: 69px; height: 3px; background: #5e5e5e; display: flex; align-items: center; padding-left: 33px; }
  .knob { width: 13px; height: 13px; border-radius: 50%; background: #999; }

  .status { height: 27px; background: #191919; display: flex; align-items: center; padding-left: 3px; gap: 5px; color: #c4c4c4; letter-spacing: .1px; flex: none; }
  .status > span { padding-top: 2px; }
  .sticons { margin-left: auto; display: flex; height: 25px; align-self: flex-end; }
  .sticons div { width: 32.500px; border-left: 1px solid #292929; display: flex; align-items: center; justify-content: center; padding-right: 4px; }

  .taskbar { height: 50px; background: #023f36; display: flex; align-items: center; color: #fff; flex: none; }
  .win { margin-left: 20px; }
  .find { margin-left: 35px; }
  .apps { display: flex; margin-left: 610px; height: 50px; }
  .app { width: 62px; height: 50px; padding-top: 10px; display: flex; flex-direction: column; align-items: center; justify-content: space-between; }
  .app.run::after { content: ""; width: 51px; height: 3px; background: #97ddd2; }
  .app.stacked::after { background: linear-gradient(90deg, #97ddd2 40px, #2c6c62 40px 41px, #76aaa3 41px); }
  .tray { margin-left: auto; display: flex; align-items: center; height: 50px; padding-right: 5px; font: 14.500px/24px "Open Sans", sans-serif; letter-spacing: -.4px; }
  .wifi { margin-left: 14px; }
  .vol { margin-left: 10px; }
  .lang { margin-left: 13px; }
  .clock { width: 68px; margin-left: 19px; display: flex; flex-direction: column; text-align: center; }
  .notes { position: relative; height: 50px; width: 47px; margin-left: 21px; padding-top: 15px; border-right: 1px solid #4d7770; }
  .notes b { position: absolute; left: 9px; top: 24px; width: 20px; height: 20px; border-radius: 50%; background: #0f5e55; border: 1px solid #629790; font: 700 14px/18px "Open Sans", sans-serif; text-align: center; }
</style>
